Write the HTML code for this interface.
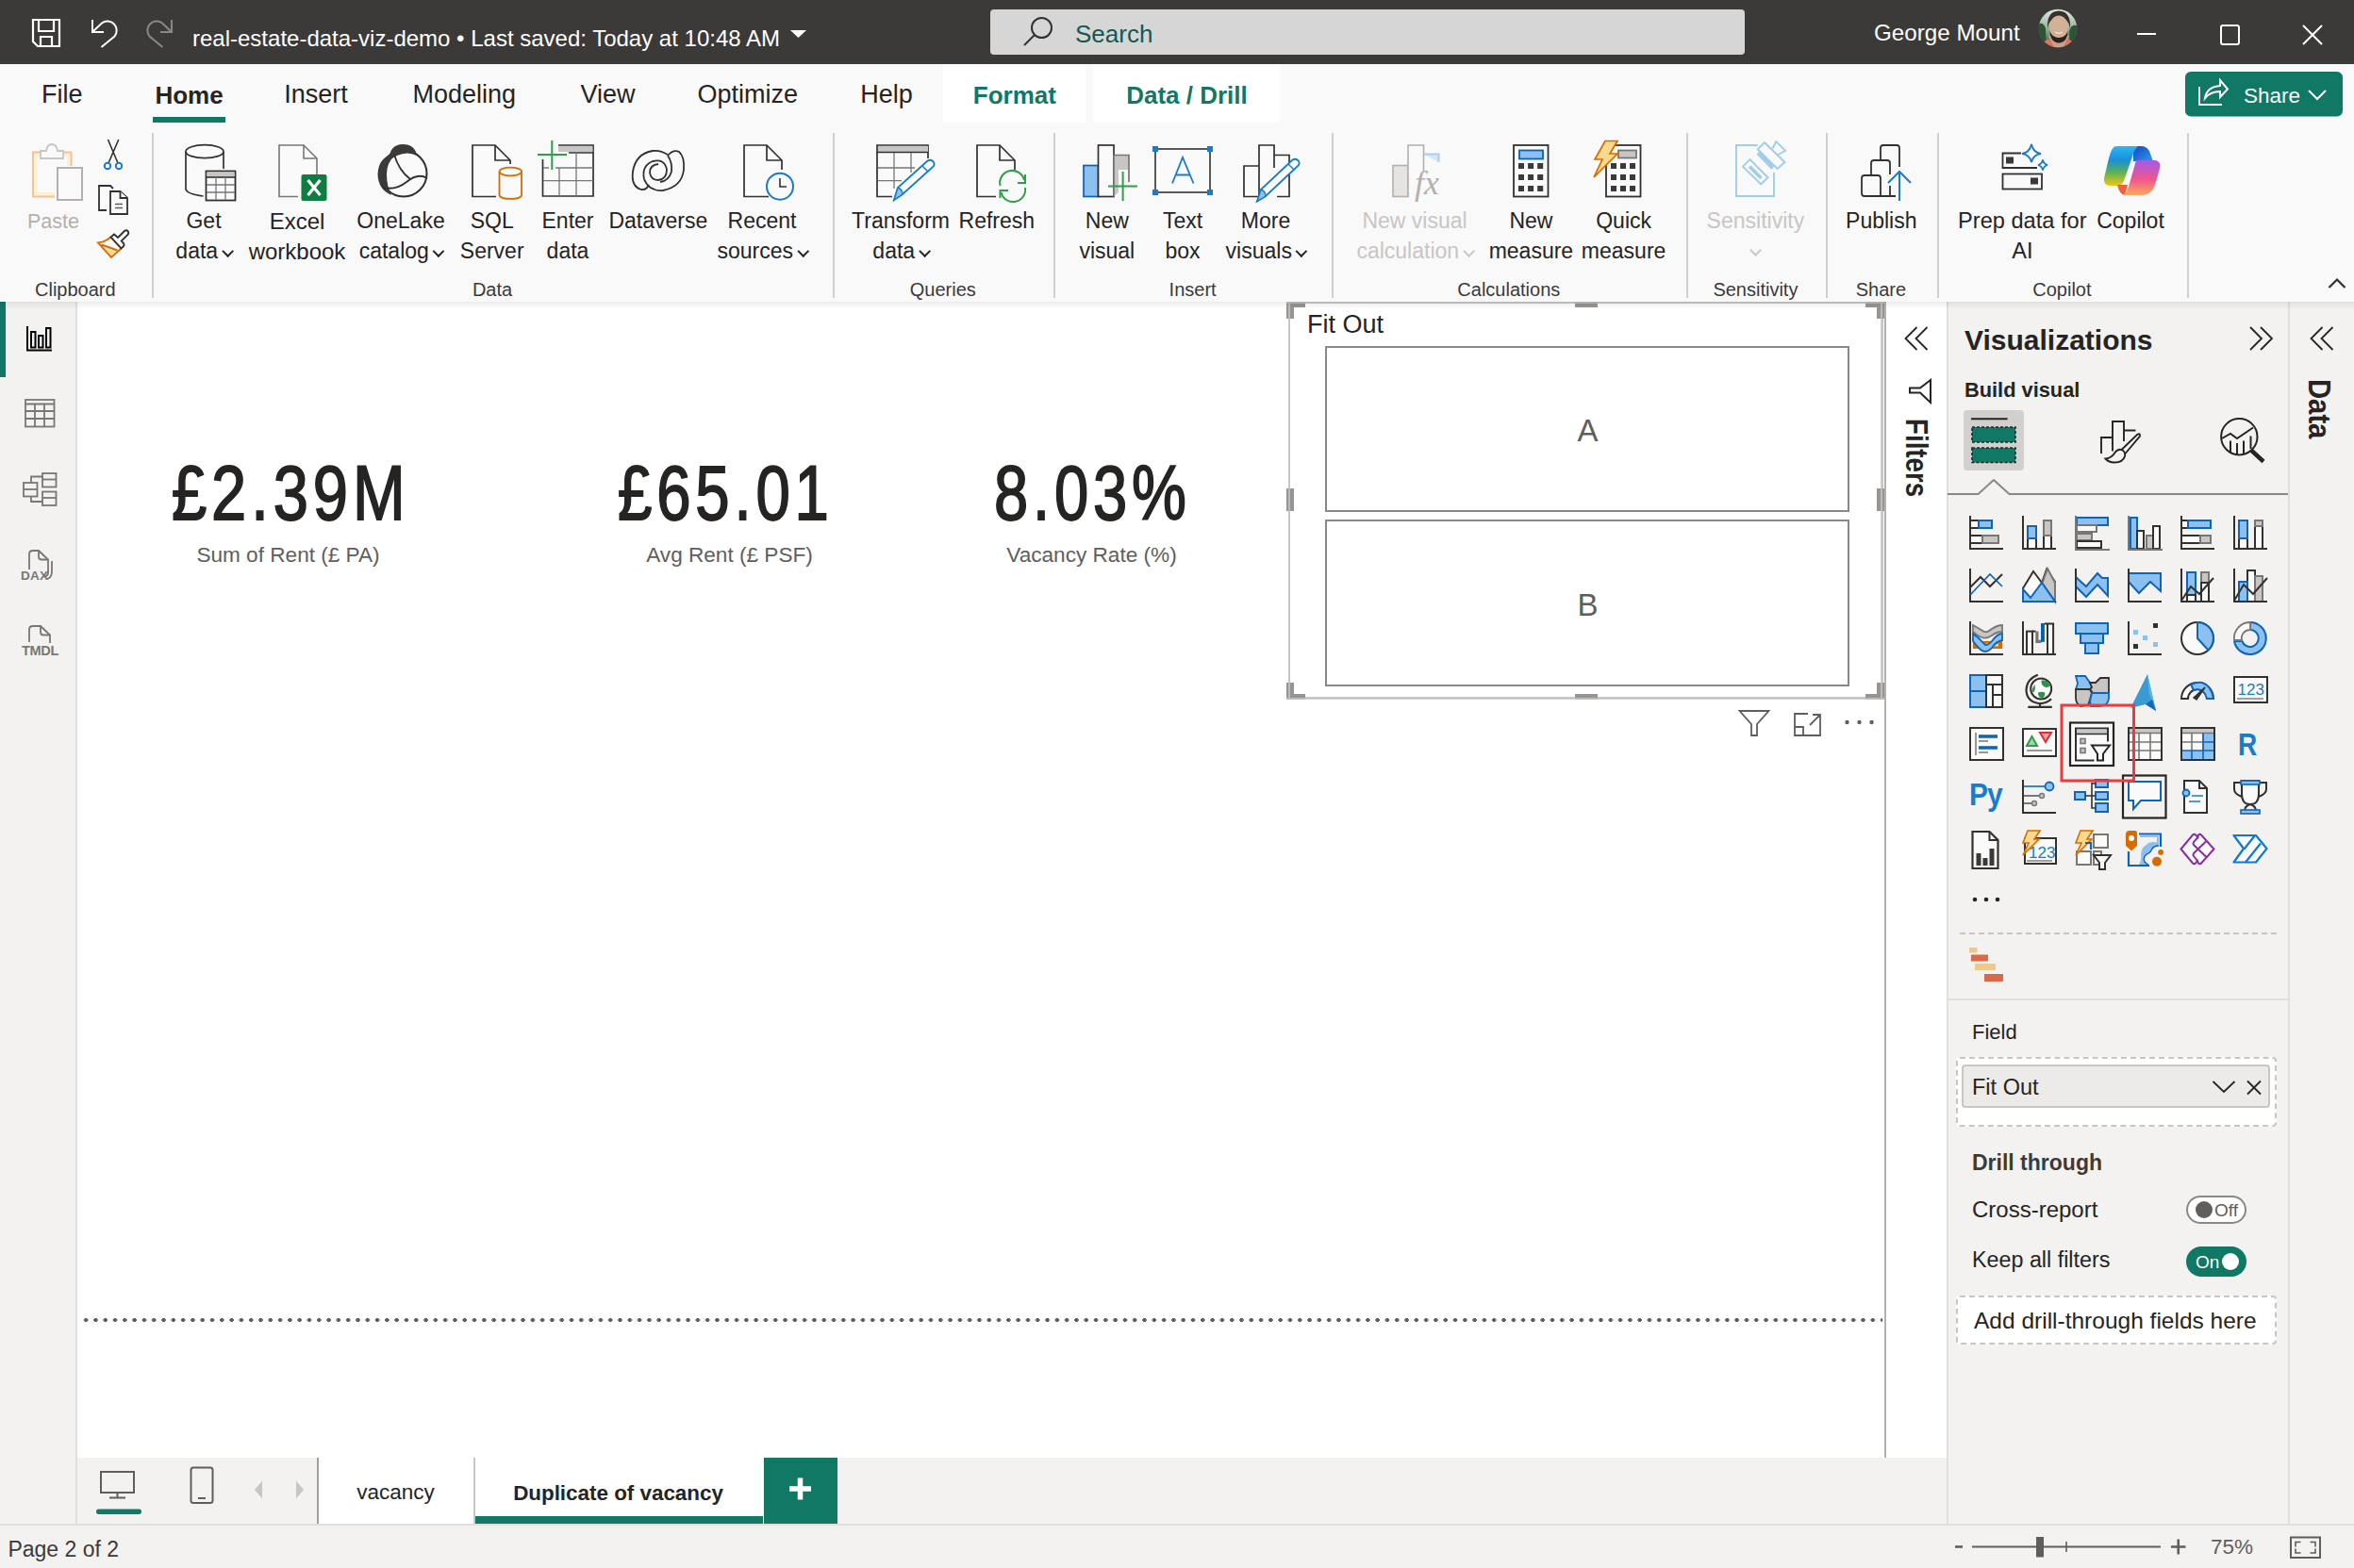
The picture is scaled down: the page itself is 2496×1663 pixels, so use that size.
<!DOCTYPE html><html><head><meta charset="utf-8"><style>
html,body{margin:0;padding:0;width:2496px;height:1663px;overflow:hidden;background:#fff;font-family:"Liberation Sans",sans-serif;}
.t{position:absolute;z-index:2;white-space:nowrap;line-height:1;font-family:"Liberation Sans",sans-serif;}
svg{overflow:visible}
</style></head><body>
<div style="position:absolute;left:0px;top:0px;width:2496px;height:68px;background:#3b3a39;"></div>
<div class="t" style="left:204px;top:28.6px;font-size:24px;font-weight:400;color:#ffffff;">real-estate-data-viz-demo &bull; Last saved: Today at 10:48 AM</div>
<div style="position:absolute;left:1050px;top:10px;width:800px;height:48px;background:#d6d6d6;border-radius:4px;"></div>
<div class="t" style="left:1140px;top:22.9px;font-size:26px;font-weight:400;color:#17584d;">Search</div>
<div class="t" style="left:1987px;top:23.4px;font-size:24.2px;font-weight:400;color:#ffffff;">George Mount</div>
<div class="t" style="left:2379px;top:90.9px;font-size:22.5px;font-weight:400;color:#ffffff;">Share</div>
<div style="position:absolute;left:0px;top:68px;width:2496px;height:252px;background:#f9f9f9;"></div>
<div style="position:absolute;left:1000px;top:68px;width:151px;height:62px;background:#ffffff;"></div>
<div style="position:absolute;left:1159px;top:68px;width:198px;height:62px;background:#ffffff;"></div>
<div class="t" style="left:65.8px;top:87.0px;font-size:27px;font-weight:400;color:#252423;transform:translateX(-50%);transform-origin:center top;">File</div>
<div class="t" style="left:200.5px;top:87.9px;font-size:26px;font-weight:700;color:#252423;transform:translateX(-50%);transform-origin:center top;">Home</div>
<div class="t" style="left:335px;top:87.0px;font-size:27px;font-weight:400;color:#252423;transform:translateX(-50%);transform-origin:center top;">Insert</div>
<div class="t" style="left:492.3px;top:87.0px;font-size:27px;font-weight:400;color:#252423;transform:translateX(-50%);transform-origin:center top;">Modeling</div>
<div class="t" style="left:644.6px;top:87.0px;font-size:27px;font-weight:400;color:#252423;transform:translateX(-50%);transform-origin:center top;">View</div>
<div class="t" style="left:792.8px;top:87.0px;font-size:27px;font-weight:400;color:#252423;transform:translateX(-50%);transform-origin:center top;">Optimize</div>
<div class="t" style="left:940px;top:87.0px;font-size:27px;font-weight:400;color:#252423;transform:translateX(-50%);transform-origin:center top;">Help</div>
<div class="t" style="left:1075.9px;top:87.9px;font-size:26px;font-weight:700;color:#117865;transform:translateX(-50%);transform-origin:center top;">Format</div>
<div class="t" style="left:1258.5px;top:87.9px;font-size:26px;font-weight:700;color:#117865;transform:translateX(-50%);transform-origin:center top;">Data / Drill</div>
<div style="position:absolute;left:162px;top:124px;width:77px;height:6px;background:#117865;"></div>
<div style="position:absolute;left:161px;top:141px;width:2px;height:175px;background:#d2d0ce;"></div>
<div style="position:absolute;left:883px;top:141px;width:2px;height:175px;background:#d2d0ce;"></div>
<div style="position:absolute;left:1117px;top:141px;width:2px;height:175px;background:#d2d0ce;"></div>
<div style="position:absolute;left:1412px;top:141px;width:2px;height:175px;background:#d2d0ce;"></div>
<div style="position:absolute;left:1788px;top:141px;width:2px;height:175px;background:#d2d0ce;"></div>
<div style="position:absolute;left:1936px;top:141px;width:2px;height:175px;background:#d2d0ce;"></div>
<div style="position:absolute;left:2054px;top:141px;width:2px;height:175px;background:#d2d0ce;"></div>
<div style="position:absolute;left:2319px;top:141px;width:2px;height:175px;background:#d2d0ce;"></div>
<div class="t" style="left:56.4px;top:224.7px;font-size:21.5px;font-weight:400;color:#b3b0ad;transform:translateX(-50%);transform-origin:center top;">Paste</div>
<div class="t" style="left:216px;top:223.4px;font-size:23px;font-weight:400;color:#252423;transform:translateX(-50%);transform-origin:center top;">Get</div>
<div class="t" style="left:216px;top:255.4px;font-size:23px;font-weight:400;color:#252423;transform:translateX(-50%);transform-origin:center top;">data<span class="chev"></span></div>
<div class="t" style="left:315px;top:222.6px;font-size:24px;font-weight:400;color:#252423;transform:translateX(-50%);transform-origin:center top;">Excel</div>
<div class="t" style="left:315px;top:254.6px;font-size:24px;font-weight:400;color:#252423;transform:translateX(-50%);transform-origin:center top;">workbook</div>
<div class="t" style="left:425px;top:223.4px;font-size:23px;font-weight:400;color:#252423;transform:translateX(-50%);transform-origin:center top;">OneLake</div>
<div class="t" style="left:425px;top:255.4px;font-size:23px;font-weight:400;color:#252423;transform:translateX(-50%);transform-origin:center top;">catalog<span class="chev"></span></div>
<div class="t" style="left:521.7px;top:223.4px;font-size:23px;font-weight:400;color:#252423;transform:translateX(-50%);transform-origin:center top;">SQL</div>
<div class="t" style="left:521.7px;top:255.4px;font-size:23px;font-weight:400;color:#252423;transform:translateX(-50%);transform-origin:center top;">Server</div>
<div class="t" style="left:602px;top:223.4px;font-size:23px;font-weight:400;color:#252423;transform:translateX(-50%);transform-origin:center top;">Enter</div>
<div class="t" style="left:602px;top:255.4px;font-size:23px;font-weight:400;color:#252423;transform:translateX(-50%);transform-origin:center top;">data</div>
<div class="t" style="left:697.8px;top:223.4px;font-size:23px;font-weight:400;color:#252423;transform:translateX(-50%);transform-origin:center top;">Dataverse</div>
<div class="t" style="left:808px;top:223.4px;font-size:23px;font-weight:400;color:#252423;transform:translateX(-50%);transform-origin:center top;">Recent</div>
<div class="t" style="left:808px;top:255.4px;font-size:23px;font-weight:400;color:#252423;transform:translateX(-50%);transform-origin:center top;">sources<span class="chev"></span></div>
<div class="t" style="left:955px;top:223.4px;font-size:23px;font-weight:400;color:#252423;transform:translateX(-50%);transform-origin:center top;">Transform</div>
<div class="t" style="left:955px;top:255.4px;font-size:23px;font-weight:400;color:#252423;transform:translateX(-50%);transform-origin:center top;">data<span class="chev"></span></div>
<div class="t" style="left:1056.8px;top:223.4px;font-size:23px;font-weight:400;color:#252423;transform:translateX(-50%);transform-origin:center top;">Refresh</div>
<div class="t" style="left:1173.8px;top:223.4px;font-size:23px;font-weight:400;color:#252423;transform:translateX(-50%);transform-origin:center top;">New</div>
<div class="t" style="left:1173.8px;top:255.4px;font-size:23px;font-weight:400;color:#252423;transform:translateX(-50%);transform-origin:center top;">visual</div>
<div class="t" style="left:1254px;top:223.4px;font-size:23px;font-weight:400;color:#252423;transform:translateX(-50%);transform-origin:center top;">Text</div>
<div class="t" style="left:1254px;top:255.4px;font-size:23px;font-weight:400;color:#252423;transform:translateX(-50%);transform-origin:center top;">box</div>
<div class="t" style="left:1342px;top:223.4px;font-size:23px;font-weight:400;color:#252423;transform:translateX(-50%);transform-origin:center top;">More</div>
<div class="t" style="left:1342px;top:255.4px;font-size:23px;font-weight:400;color:#252423;transform:translateX(-50%);transform-origin:center top;">visuals<span class="chev"></span></div>
<div class="t" style="left:1500px;top:223.4px;font-size:23px;font-weight:400;color:#c8c6c4;transform:translateX(-50%);transform-origin:center top;">New visual</div>
<div class="t" style="left:1500px;top:255.4px;font-size:23px;font-weight:400;color:#c8c6c4;transform:translateX(-50%);transform-origin:center top;">calculation<span class="chev g"></span></div>
<div class="t" style="left:1623.4px;top:223.4px;font-size:23px;font-weight:400;color:#252423;transform:translateX(-50%);transform-origin:center top;">New</div>
<div class="t" style="left:1623.4px;top:255.4px;font-size:23px;font-weight:400;color:#252423;transform:translateX(-50%);transform-origin:center top;">measure</div>
<div class="t" style="left:1721.6px;top:223.4px;font-size:23px;font-weight:400;color:#252423;transform:translateX(-50%);transform-origin:center top;">Quick</div>
<div class="t" style="left:1721.6px;top:255.4px;font-size:23px;font-weight:400;color:#252423;transform:translateX(-50%);transform-origin:center top;">measure</div>
<div class="t" style="left:1861.4px;top:223.4px;font-size:23px;font-weight:400;color:#c8c6c4;transform:translateX(-50%);transform-origin:center top;">Sensitivity</div>
<div style="position:absolute;left:1857px;top:261px;width:7px;height:7px;border-right:2px solid #c8c6c4;border-bottom:2px solid #c8c6c4;transform:rotate(45deg)"></div>
<div class="t" style="left:1994.8px;top:223.4px;font-size:23px;font-weight:400;color:#252423;transform:translateX(-50%);transform-origin:center top;">Publish</div>
<div class="t" style="left:2144.3px;top:222.9px;font-size:23.6px;font-weight:400;color:#252423;transform:translateX(-50%);transform-origin:center top;">Prep data for</div>
<div class="t" style="left:2144.3px;top:254.9px;font-size:23.6px;font-weight:400;color:#252423;transform:translateX(-50%);transform-origin:center top;">AI</div>
<div class="t" style="left:2259px;top:223.4px;font-size:23px;font-weight:400;color:#252423;transform:translateX(-50%);transform-origin:center top;">Copilot</div>
<div class="t" style="left:79.8px;top:296.6px;font-size:20px;font-weight:400;color:#3b3a39;transform:translateX(-50%);transform-origin:center top;">Clipboard</div>
<div class="t" style="left:522px;top:296.6px;font-size:20px;font-weight:400;color:#3b3a39;transform:translateX(-50%);transform-origin:center top;">Data</div>
<div class="t" style="left:999.8px;top:296.6px;font-size:20px;font-weight:400;color:#3b3a39;transform:translateX(-50%);transform-origin:center top;">Queries</div>
<div class="t" style="left:1264.6px;top:296.6px;font-size:20px;font-weight:400;color:#3b3a39;transform:translateX(-50%);transform-origin:center top;">Insert</div>
<div class="t" style="left:1599.8px;top:296.6px;font-size:20px;font-weight:400;color:#3b3a39;transform:translateX(-50%);transform-origin:center top;">Calculations</div>
<div class="t" style="left:1861.4px;top:296.6px;font-size:20px;font-weight:400;color:#3b3a39;transform:translateX(-50%);transform-origin:center top;">Sensitivity</div>
<div class="t" style="left:1994.4px;top:296.6px;font-size:20px;font-weight:400;color:#3b3a39;transform:translateX(-50%);transform-origin:center top;">Share</div>
<div class="t" style="left:2186.4px;top:296.6px;font-size:20px;font-weight:400;color:#3b3a39;transform:translateX(-50%);transform-origin:center top;">Copilot</div>
<div style="position:absolute;left:0px;top:320px;width:80px;height:1296px;background:#f3f2f1;"></div>
<div style="position:absolute;left:80px;top:320px;width:2px;height:1296px;background:#e1dfdd;"></div>
<div style="position:absolute;left:0px;top:320px;width:6px;height:80px;background:#117865;"></div>
<div style="position:absolute;left:82px;top:320px;width:1982px;height:1226px;background:#ffffff;"></div>
<div style="position:absolute;left:1998px;top:320px;width:2px;height:1226px;background:#b3b0ad;"></div>
<div style="position:absolute;left:86px;top:1398px;width:1910px;height:4px;background-image:radial-gradient(circle,#605e5c 1.9px,transparent 2.3px);background-size:10.3px 4px;"></div>
<div class="t" style="left:182px;top:482.6px;font-size:81px;font-weight:400;color:#252423;transform:scaleX(0.825);transform-origin:left top;-webkit-text-stroke:1.8px #252423;letter-spacing:6px;">&pound;2.39M</div>
<div class="t" style="left:655px;top:482.6px;font-size:81px;font-weight:400;color:#252423;transform:scaleX(0.806);transform-origin:left top;-webkit-text-stroke:1.8px #252423;letter-spacing:6px;">&pound;65.01</div>
<div class="t" style="left:1054px;top:482.6px;font-size:81px;font-weight:400;color:#252423;transform:scaleX(0.804);transform-origin:left top;-webkit-text-stroke:1.8px #252423;letter-spacing:6px;">8.03%</div>
<div class="t" style="left:305.5px;top:578.3px;font-size:22.6px;font-weight:400;color:#605e5c;transform:translateX(-50%);transform-origin:center top;">Sum of Rent (&pound; PA)</div>
<div class="t" style="left:773.5px;top:578.3px;font-size:22.6px;font-weight:400;color:#605e5c;transform:translateX(-50%);transform-origin:center top;">Avg Rent (&pound; PSF)</div>
<div class="t" style="left:1157.5px;top:578.3px;font-size:22.6px;font-weight:400;color:#605e5c;transform:translateX(-50%);transform-origin:center top;">Vacancy Rate (%)</div>
<div style="position:absolute;left:1366px;top:320px;width:631px;height:421px;background:transparent;border:2px solid #c8c6c4;box-sizing:border-box;z-index:1;"></div>
<div class="t" style="left:1386px;top:331.1px;font-size:27px;font-weight:400;color:#252423;">Fit Out</div>
<div style="position:absolute;left:1405px;top:367px;width:556px;height:176px;background:#fff;border:2px solid #8a8886;box-sizing:border-box;"></div>
<div style="position:absolute;left:1405px;top:551px;width:556px;height:177px;background:#fff;border:2px solid #8a8886;box-sizing:border-box;"></div>
<div class="t" style="left:1683.5px;top:440.4px;font-size:33px;font-weight:400;color:#605e5c;transform:translateX(-50%);transform-origin:center top;">A</div>
<div class="t" style="left:1683.5px;top:624.5px;font-size:33px;font-weight:400;color:#605e5c;transform:translateX(-50%);transform-origin:center top;">B</div>
<div style="position:absolute;left:82px;top:1546px;width:1982px;height:70px;background:#f3f2f1;"></div>
<div style="position:absolute;left:336px;top:1546px;width:2px;height:70px;background:#a19f9d;"></div>
<div style="position:absolute;left:338px;top:1546px;width:164px;height:70px;background:#ffffff;"></div>
<div style="position:absolute;left:502px;top:1546px;width:2px;height:70px;background:#c8c6c4;"></div>
<div style="position:absolute;left:504px;top:1546px;width:305px;height:70px;background:#ffffff;"></div>
<div style="position:absolute;left:504px;top:1608px;width:305px;height:8px;background:#117865;"></div>
<div style="position:absolute;left:810px;top:1546px;width:78px;height:70px;background:#117865;"></div>
<div class="t" style="left:419.6px;top:1572.4px;font-size:22.5px;font-weight:400;color:#252423;transform:translateX(-50%);transform-origin:center top;">vacancy</div>
<div class="t" style="left:655.5px;top:1572.5px;font-size:22.4px;font-weight:700;color:#252423;transform:translateX(-50%);transform-origin:center top;">Duplicate of vacancy</div>
<div style="position:absolute;left:2000px;top:320px;width:64px;height:1226px;background:#ffffff;"></div>
<div style="position:absolute;left:2064px;top:320px;width:2px;height:1296px;background:#e1dfdd;"></div>
<div class="t" style="left:2049.7px;top:444px;font-size:34px;font-weight:700;color:#252423;transform:rotate(90deg) scaleX(0.815);transform-origin:left top;">Filters</div>
<div style="position:absolute;left:2066px;top:320px;width:360px;height:1296px;background:#f3f2f1;"></div>
<div style="position:absolute;left:2426px;top:320px;width:2px;height:1296px;background:#e1dfdd;"></div>
<div style="position:absolute;left:2428px;top:320px;width:68px;height:1296px;background:#f3f2f1;"></div>
<div class="t" style="left:2083px;top:345.5px;font-size:30px;font-weight:700;color:#252423;">Visualizations</div>
<div class="t" style="left:2083px;top:402.5px;font-size:21.8px;font-weight:700;color:#252423;">Build visual</div>
<div style="position:absolute;left:2082px;top:435px;width:64px;height:64px;background:#d2d0ce;border-radius:4px;"></div>
<div style="position:absolute;left:2066px;top:1059px;width:360px;height:2px;background:#e1dfdd;"></div>
<div class="t" style="left:2091px;top:1083.8px;font-size:22px;font-weight:400;color:#252423;">Field</div>
<div style="position:absolute;left:2074px;top:1121px;width:340px;height:74px;background:#ffffff;border:2px dashed #c8c6c4;border-radius:4px;box-sizing:border-box;"></div>
<div style="position:absolute;left:2080px;top:1129px;width:327px;height:46px;background:#edebe9;border:2px solid #c8c6c4;border-radius:4px;box-sizing:border-box;"></div>
<div class="t" style="left:2091px;top:1142.0px;font-size:23.5px;font-weight:400;color:#252423;">Fit Out</div>
<div class="t" style="left:2091px;top:1221.5px;font-size:23px;font-weight:700;color:#3b3a39;">Drill through</div>
<div class="t" style="left:2091px;top:1270.6px;font-size:24px;font-weight:400;color:#252423;">Cross-report</div>
<div class="t" style="left:2091px;top:1325.2px;font-size:23.3px;font-weight:400;color:#252423;">Keep all filters</div>
<div style="position:absolute;left:2318px;top:1268px;width:64px;height:30px;background:#fff;border:2px solid #8a8886;border-radius:16px;box-sizing:border-box;"></div>
<div style="position:absolute;left:2328px;top:1274px;width:18px;height:18px;background:#605e5c;border-radius:50%;"></div>
<div class="t" style="left:2348px;top:1273.8px;font-size:19px;font-weight:400;color:#605e5c;">Off</div>
<div style="position:absolute;left:2318px;top:1322px;width:64px;height:32px;background:#117865;border-radius:16px;"></div>
<div class="t" style="left:2328px;top:1328.8px;font-size:19px;font-weight:400;color:#ffffff;">On</div>
<div style="position:absolute;left:2356px;top:1329px;width:18px;height:18px;background:#ffffff;border-radius:50%;"></div>
<div style="position:absolute;left:2074px;top:1374px;width:340px;height:52px;background:#ffffff;border:2px dashed #c8c6c4;border-radius:4px;box-sizing:border-box;"></div>
<div class="t" style="left:2093px;top:1389.2px;font-size:24.5px;font-weight:400;color:#252423;">Add drill-through fields here</div>
<div class="t" style="left:2476.5px;top:401.5px;font-size:34px;font-weight:700;color:#252423;transform:rotate(90deg) scaleX(0.86);transform-origin:left top;">Data</div>
<div style="position:absolute;left:0px;top:1616px;width:2496px;height:2px;background:#e1dfdd;"></div>
<div style="position:absolute;left:0px;top:1618px;width:2496px;height:45px;background:#f3f2f1;"></div>
<div class="t" style="left:8.4px;top:1631.5px;font-size:23px;font-weight:400;color:#3b3a39;">Page 2 of 2</div>
<div class="t" style="left:2344px;top:1630.4px;font-size:22.5px;font-weight:400;color:#605e5c;">75%</div>
<div style="position:absolute;left:0px;top:320px;width:2496px;height:8px;background:linear-gradient(rgba(0,0,0,0.075),rgba(0,0,0,0));z-index:3;"></div>
<style>.chev{display:inline-block;width:6.5px;height:6.5px;border-right:2.4px solid #252423;border-bottom:2.4px solid #252423;transform:rotate(45deg);margin-left:6px;position:relative;top:-4px}.chev.g{border-color:#c8c6c4}</style>
<svg style="position:absolute;z-index:1;left:0;top:0;pointer-events:none" width="2496" height="1663" viewBox="0 0 2496 1663" fill="none"><g stroke="#fff" stroke-width="2.2" fill="none"><path d="M35,21 H63 V49 H40 L35,44 Z"/><path d="M41,21 V33 H57 V21"/><path d="M43,49 V39 H55 V49"/></g><g stroke="#fff" stroke-width="2" fill="none" stroke-linecap="butt"><path d="M98,21 V34 H110"/><path d="M98,34 L108,24.5 A9.8,9.8 0 0 1 121.5,38.5 L107.5,50"/></g><g stroke="#8a8886" stroke-width="2" fill="none"><path d="M182,21 V34 H170"/><path d="M182,34 L172,24.5 A9.8,9.8 0 0 0 158.5,38.5 L172.5,50"/></g><path d="M838,32 H855 L846.5,40 Z" fill="#fff"/><g stroke="#323130" stroke-width="2" fill="none"><circle cx="1104.5" cy="29.5" r="10.5"/><path d="M1097,37 L1086,48"/></g><defs><clipPath id="avc"><circle cx="2182" cy="30" r="20.2"/></clipPath><linearGradient id="avbg" x1="0" y1="0" x2="0" y2="1"><stop offset="0" stop-color="#e4ebe6"/><stop offset="0.45" stop-color="#9fb8a5"/><stop offset="1" stop-color="#2f5a3a"/></linearGradient></defs><g clip-path="url(#avc)"><rect x="2161" y="9" width="42" height="42" fill="url(#avbg)"/><path d="M2161,26 Q2166,22 2169,30 L2170,50 H2161Z M2203,28 Q2196,24 2194,34 L2195,50 H2203Z" fill="#2d5535"/><path d="M2171,30 Q2170,12 2183,11.5 Q2196,12 2195,30 Q2193,18 2183,18.5 Q2173,18 2171,30Z" fill="#3a302a"/><path d="M2172,38 L2178,52 H2188 L2194,38Z" fill="#c9a188"/><ellipse cx="2183" cy="29" rx="9.8" ry="12.5" fill="#d4b096"/><path d="M2173.5,33 Q2174,45 2183,45.5 Q2192,45 2192.5,33 Q2190,40 2183,40 Q2176,40 2173.5,33Z" fill="#2b211d"/><path d="M2179,34 Q2183,36.5 2187,34" stroke="#f0e0d8" stroke-width="1.4" fill="none"/><path d="M2162,52 Q2166,43 2173,41.5 L2178,50 H2188 L2192,41.5 Q2199,43 2203,52Z" fill="#e4715a"/></g><g stroke="#fff" stroke-width="2" fill="none"><path d="M2266,36 H2286"/><rect x="2355" y="27" width="19" height="20" rx="2"/><path d="M2442,27 L2462,47 M2462,27 L2442,47"/></g><rect x="2317" y="76" width="167" height="47.5" rx="6" fill="#117865"/><g stroke="#fff" stroke-width="2" fill="none"><path d="M2332,92 V111 H2356"/><path d="M2338,104 Q2340,92 2354,91 V85 L2362,94.5 L2354,103 V97 Q2344,97 2338,104Z"/><path d="M2448,96 L2457,105 L2466,96"/></g><path d="M58,206.5 H37 V163.5 H73.5 V176" stroke="#fdf0d3" stroke-width="5" fill="none"/><path d="M58,208.5 H35 V161.5 H75.5 V176" stroke="#f2c39a" stroke-width="2" fill="none"/><path d="M58,204.5 H39 V165.5 H71.5 V176" stroke="#f2c39a" stroke-width="0" fill="none"/><path d="M43,160 H49 Q50,153 55,153 Q60,153 61,160 H67 V168 H43 Z" stroke="#c8c6c4" stroke-width="1.8" fill="#f9f9f9"/><rect x="61" y="178" width="26" height="34" stroke="#b3b0ad" stroke-width="2" fill="#fafafa"/><g stroke="#323130" stroke-width="1.6" fill="none"><path d="M114.5,148 L125,173 M125.8,148 L115,173"/></g><g stroke="#1a7cc4" stroke-width="2" fill="#fff"><circle cx="114" cy="176" r="3.2"/><circle cx="126" cy="176" r="3.2"/></g><g stroke="#323130" stroke-width="1.8" fill="#fafafa"><path d="M113,223 H105 V197 H117 L120,200"/><path d="M117,203 H127.5 L135,210 V227 H117 Z"/><path d="M127.5,203 V210 H135"/></g><g stroke="#605e5c" stroke-width="1.4"><path d="M122,216.5 H130 M122,220.5 H130"/></g><path d="M109.5,262 L123,266.5 L118,271 Z" fill="#f8d98f"/><path d="M117.5,251.5 Q112,256.5 104,257.5 L118,273 L128.5,263.5 M107.5,259.5 L124.5,265.5" stroke="#d86b00" stroke-width="1.9" fill="none"/><path d="M117.5,251.5 L121,248.5 L125,252 L132,245 Q134,243.3 135.7,245.3 Q137,247.5 135.2,249.2 L128.8,255.6 L131,258 Q132.2,260 130.6,261.6 L128.5,263.5 Z" stroke="#323130" stroke-width="1.9" fill="#fafafa"/><g stroke="#323130" stroke-width="1.7" fill="#fafafa"><path d="M197,161 V201 Q199,206 215.5,208"/><path d="M237,161 V179"/><ellipse cx="217" cy="160.7" rx="20" ry="7"/></g><rect x="218.5" y="181.5" width="31" height="31" stroke="#323130" stroke-width="1.8" fill="#fafafa"/><rect x="219.5" y="182.5" width="29" height="5" fill="#c8c6c4"/><path d="M218.5,188 H249.5" stroke="#323130" stroke-width="1.6"/><g stroke="#797775" stroke-width="1.3"><path d="M229,188 V212 M239,188 V212 M219,196 H249 M219,204 H249"/></g><path d="M316,208.5 H296 V154 H322 L336,168 V185" stroke="#797775" stroke-width="1.6" fill="#fafafa"/><path d="M322,154 V168 H336" stroke="#797775" stroke-width="1.6" fill="none"/><rect x="319.5" y="185" width="27" height="28" rx="2" fill="#107c41"/><path d="M326.5,191 L339.5,207 M339.5,191 L326.5,207" stroke="#fff" stroke-width="3.2"/><circle cx="428" cy="184" r="24.5" stroke="#323130" stroke-width="2" fill="#fafafa"/><path d="M412,171 Q413,153 427,153 Q440,153 442,165 Q432,160 421,165 Q416,167 412,171Z" fill="#3b3a39"/><path d="M414,164 Q401,169 400.5,185 Q401,201 415,207 Q410,197 410,185 Q410,172 419,165Z" fill="#3b3a39"/><path d="M418,164 Q423,181 435,190 M406,199 Q420,202 431,193 Q443,183 453,189" stroke="#323130" stroke-width="1.8" fill="none"/><path d="M526,208.5 H501 V154 H525 L541,170 V174" stroke="#323130" stroke-width="1.7" fill="#fafafa"/><path d="M525,154 V170 H541" stroke="#323130" stroke-width="1.7" fill="none"/><path d="M529.5,182 V207.5 A12,4.3 0 0 0 553,207.5 V182" stroke="#d86b00" stroke-width="1.8" fill="#fafafa"/><ellipse cx="541.3" cy="182" rx="11.8" ry="4.3" stroke="#d86b00" stroke-width="1.8" fill="#fafafa"/><path d="M575.5,169 V208 H629 V154 H592" stroke="#323130" stroke-width="1.7" fill="#fafafa"/><rect x="592" y="155" width="36.5" height="6" fill="#c8c6c4"/><path d="M603,162 H629" stroke="#323130" stroke-width="1.5"/><g stroke="#797775" stroke-width="1.3"><path d="M593,178 V208 M611,162 V208 M576,178 H582 M589,178 H629 M576,191.7 H629"/></g><path d="M570,164 H601 M585.3,149 V180" stroke="#2e9e48" stroke-width="2"/><g stroke="#323130" stroke-width="1.8" fill="none"><path d="M708,164 Q700,159 692,160 Q674,163 671,182 Q669,198 680,201 Q685,202 688,196"/><path d="M708,165 Q714,158 720,161 Q726,166 725,180 Q723,198 703,202 Q688,203 683,190 Q680,176 692,171 Q705,168 707,180 Q707,190 698,191 Q690,191 689,183 Q689,175 698,174"/><path d="M708,165 Q713,172 712,182 Q709,192 700,193"/></g><path d="M815,208.5 H789 V154 H813 L829,170 V180" stroke="#323130" stroke-width="1.7" fill="#fafafa"/><path d="M813,154 V170 H829" stroke="#323130" stroke-width="1.7" fill="none"/><circle cx="827" cy="197.7" r="14" stroke="#1a7cc4" stroke-width="2" fill="#fafafa"/><path d="M827,189 V198 H834" stroke="#323130" stroke-width="1.6" fill="none"/><path d="M946,208.5 H930 V154 H984 V168" stroke="#323130" stroke-width="1.7" fill="#fafafa"/><rect x="931" y="155" width="53" height="6" fill="#c8c6c4"/><path d="M930,161.5 H984" stroke="#323130" stroke-width="1.6"/><g stroke="#797775" stroke-width="1.3"><path d="M948,162 V200 M966,162 V183 M931,178 H970 M931,191.6 H956"/></g><path d="M948,212 L952,199 L983,171 Q987,168 990,172 Q992,175 988,178 L957,206 Z" stroke="#1a7cc4" stroke-width="1.8" fill="#fafafa"/><path d="M948,212 L952,199 Q957,201 957,206 Z" fill="#8cc0ef" stroke="#1a7cc4" stroke-width="1.4"/><path d="M978,176 L984,182" stroke="#1a7cc4" stroke-width="1.4"/><path d="M1056,208.5 H1036 V154 H1060 L1076,170 V180" stroke="#323130" stroke-width="1.7" fill="#fafafa"/><path d="M1060,154 V170 H1076" stroke="#323130" stroke-width="1.7" fill="none"/><circle cx="1073.7" cy="197.8" r="16" fill="#fafafa"/><g stroke="#2e9e48" stroke-width="2" fill="none"><path d="M1060.5,197 A13,13 0 0 1 1086,191"/><path d="M1087,185 V194 H1079"/><path d="M1087,199 A13,13 0 0 1 1061.5,204"/><path d="M1060.5,210 V202 H1069"/></g><rect x="1149" y="175.5" width="15.5" height="33" stroke="#0f5fb5" stroke-width="1.7" fill="#8cc0ef"/><rect x="1164.5" y="154" width="16.5" height="54.5" stroke="#323130" stroke-width="1.7" fill="#fafafa"/><path d="M1181,208.5 V164.5 H1197 V193" stroke="#797775" stroke-width="1.7" fill="#c8c6c4"/><rect x="1186" y="180" width="10" height="30" fill="#fafafa"/><path d="M1175,197.5 H1206 M1190.6,182 V213" stroke="#2e9e48" stroke-width="2"/><rect x="1225" y="158" width="58" height="46" stroke="#323130" stroke-width="1.6" fill="#fafafa"/><g fill="#1a7cc4"><rect x="1222" y="155" width="6" height="6"/><rect x="1280" y="155" width="6" height="6"/><rect x="1222" y="201" width="6" height="6"/><rect x="1280" y="201" width="6" height="6"/></g><path d="M1243,194.5 L1254,167 L1265.5,194.5 M1247,185.5 H1261.5" stroke="#1a7cc4" stroke-width="1.8" fill="none"/><g stroke="#323130" stroke-width="1.7" fill="#fafafa"><path d="M1334,208.5 H1319 V176 H1334.5"/><path d="M1335,208 V154 H1351 V164.5 H1367 V208.5 H1354"/><path d="M1351,164.5 V178"/></g><path d="M1333,213.5 L1337,201 L1370,170 Q1374,167 1377,171 Q1379,174 1375,177 L1342,208 Z" stroke="#1a7cc4" stroke-width="1.8" fill="#fafafa"/><path d="M1333,213.5 L1337,201 Q1342,203 1342,208 Z" fill="#8cc0ef" stroke="#1a7cc4" stroke-width="1.4"/><path d="M1366,174 L1372,180" stroke="#1a7cc4" stroke-width="1.4"/><rect x="1477" y="175.5" width="16" height="33" stroke="#b3b0ad" stroke-width="1.6" fill="#e6e4e2"/><path d="M1493,208.5 V154 H1509.5 V182" stroke="#b3b0ad" stroke-width="1.6" fill="#fafafa"/><path d="M1509.5,163.5 H1525.5 V172" stroke="#a9cdee" stroke-width="1.8" fill="#d6e8f8"/><text x="1500" y="206" font-family="Liberation Serif" font-style="italic" font-size="36" fill="#b3b0ad">fx</text><rect x="1605" y="154" width="36.5" height="54.5" stroke="#323130" stroke-width="1.8" fill="#fafafa"/><rect x="1611" y="159.5" width="25" height="9" stroke="#0f5fb5" stroke-width="1.8" fill="#8cc0ef"/><g fill="#3b3a39"><rect x="1610.0" y="173" width="6" height="6"/><rect x="1610.0" y="185" width="6" height="6"/><rect x="1610.0" y="197" width="6" height="6"/><rect x="1620.1" y="173" width="6" height="6"/><rect x="1620.1" y="185" width="6" height="6"/><rect x="1620.1" y="197" width="6" height="6"/><rect x="1630.2" y="173" width="6" height="6"/><rect x="1630.2" y="185" width="6" height="6"/><rect x="1630.2" y="197" width="6" height="6"/></g><rect x="1703" y="154" width="36.5" height="54.5" stroke="#323130" stroke-width="1.8" fill="#fafafa"/><rect x="1716" y="159.5" width="19" height="8" stroke="#797775" stroke-width="1.8" fill="#c8c6c4"/><g fill="#3b3a39"><rect x="1708.0" y="173" width="6" height="6"/><rect x="1708.0" y="185" width="6" height="6"/><rect x="1708.0" y="197" width="6" height="6"/><rect x="1718.0" y="173" width="6" height="6"/><rect x="1718.0" y="185" width="6" height="6"/><rect x="1718.0" y="197" width="6" height="6"/><rect x="1728.0" y="173" width="6" height="6"/><rect x="1728.0" y="185" width="6" height="6"/><rect x="1728.0" y="197" width="6" height="6"/></g><path d="M1702,149.5 H1715 L1707,163 H1715 L1690,188 L1699,169 H1691 Z" stroke="#d86b00" stroke-width="1.7" fill="#f8d98f"/><g stroke="#a0cde8" stroke-width="1.9" fill="none"><path d="M1863.5,154 H1841 V208 H1881 V183"/><path d="M1848,176.7 L1855.5,169 L1874.5,188.3 L1867.2,195.5 Z"/><path d="M1863.8,158.4 L1871,151.2 L1892.5,172 L1884.6,179 Z"/><path d="M1879.5,157.5 L1883.3,150 L1893,159.7 L1885.5,164"/></g><path d="M1855,176.5 L1867.5,189" stroke="#a0cde8" stroke-width="3.5"/><path d="M1862.5,163.5 L1866.5,160 L1882,175.5 L1878.5,180 Z" fill="#a0cde8"/><g stroke="#323130" stroke-width="1.8" fill="none"><path d="M1994,169 V157 Q1994,154 1997,154 H2011 Q2014,154 2014,157 V177"/><path d="M1984,185 V173 Q1984,170 1987,170 H2001 Q2004,170 2004,173 V185 M2004,197 V208"/><path d="M1977,186 H1991 Q1994,186 1994,189 V208 M2010,208 H1977 Q1974,208 1974,205 V189 Q1974,186 1977,186"/></g><path d="M2014,213 V182 M2002,194 L2014,182 L2026,194" stroke="#1a7cc4" stroke-width="2" fill="none"/><g stroke="#323130" stroke-width="1.8" fill="none"><path d="M2143,162.5 H2123.5 V178 H2160"/><rect x="2123.5" y="184.5" width="41.5" height="16"/></g><g fill="#3b3a39"><rect x="2127" y="166.5" width="8" height="7"/><rect x="2153" y="188.5" width="8" height="7"/></g><g stroke="#1a7cc4" stroke-width="1.8" fill="#fafafa"><path d="M2154,153 Q2156,162 2164,163 Q2156,164 2154,172 Q2152,164 2144,163 Q2152,162 2154,153Z"/><path d="M2166,169.5 Q2167,174 2171,175 Q2167,176 2166,180.5 Q2165,176 2161,175 Q2165,174 2166,169.5Z"/></g><defs><linearGradient id="cpA" x1="0" y1="0" x2="0" y2="1"><stop offset="0" stop-color="#2bb6f6"/><stop offset="0.35" stop-color="#1b8fd8"/><stop offset="0.65" stop-color="#57b05a"/><stop offset="1" stop-color="#f2c811"/></linearGradient><linearGradient id="cpB" x1="0" y1="0" x2="0" y2="1"><stop offset="0" stop-color="#a35be8"/><stop offset="0.55" stop-color="#f0568e"/><stop offset="1" stop-color="#fbaa5a"/></linearGradient><linearGradient id="cpC" x1="0" y1="0" x2="1" y2="1"><stop offset="0" stop-color="#1546c8"/><stop offset="1" stop-color="#2f9be8"/></linearGradient></defs><path d="M2262,155 H2272 Q2278,156 2280,163 L2283,171 H2262 Z" fill="url(#cpC)"/><path d="M2244,155 H2267 Q2263,159 2261,166 L2252,192 Q2250,197 2244,197 H2237 Q2230,196 2231,189 L2236,168 Q2239,155 2244,155 Z" fill="url(#cpA)"/><path d="M2245,196 H2256 L2253,207 Q2247,206 2245,196Z" fill="#f0613c"/><path d="M2265,170 H2285 Q2292,171 2290,179 L2285,196 Q2281,207 2272,207 H2250 Q2255,205 2257,198 Z" fill="url(#cpB)"/><path d="M2469.5,305 L2478,296.5 L2486.5,305" stroke="#323130" stroke-width="2.2" fill="none"/><g stroke="#000" stroke-width="2" fill="none"><path d="M29,346 V371.5 H55"/><rect x="33" y="352" width="4.5" height="16.5"/><rect x="41" y="356" width="4.5" height="12.5"/><rect x="49" y="348" width="4.5" height="20.5"/></g><g stroke="#797775" stroke-width="1.8" fill="none"><rect x="27" y="424" width="30.5" height="28.5"/><path d="M27,428.5 H57.5 M27,436 H57.5 M27,444 H57.5 M37,428.5 V452.5 M47,428.5 V452.5"/></g><g stroke="#797775" stroke-width="1.8" fill="none"><rect x="25" y="512" width="14.5" height="14.5"/><path d="M25,519 H39.5"/><rect x="45" y="502" width="14.5" height="14.5"/><path d="M45,508.5 H59.5"/><rect x="45" y="521.5" width="14.5" height="14.5"/><path d="M45,528 H59.5"/><path d="M33,512 V505.5 H45 M33,526.5 V532 H45"/></g><g stroke="#797775" stroke-width="1.8" fill="none"><path d="M31,604 V587.5 Q31,584 35,584 H41 L51,593.5 V607 Q51,610.5 48,611.5"/><path d="M41,584 V590.5 Q41,593.5 44,593.5 H51"/><path d="M55,595 V606 Q55,612.5 50,614"/></g><text x="22" y="614.6" font-family="Liberation Sans" font-weight="bold" font-size="13.5" fill="#797775" letter-spacing="0.2">DAX</text><g stroke="#797775" stroke-width="1.8" fill="none"><path d="M31,681 V667.5 Q31,664 35,664 H43 L53,673.5 V682"/><path d="M43,664 V670.5 Q43,673.5 46,673.5 H53"/></g><text x="23" y="694.7" font-family="Liberation Sans" font-weight="bold" font-size="14.5" fill="#797775" letter-spacing="-0.3">TMDL</text><g fill="#979593"><path d="M1364,320 H1384 V326 H1372 V338 H1364 Z"/><path d="M1998,320 H1978 V326 H1990 V338 H1998 Z"/><path d="M1364,742 H1384 V736 H1372 V724 H1364 Z"/><path d="M1998,742 H1978 V736 H1990 V724 H1998 Z"/><rect x="1670" y="320" width="24" height="6"/><rect x="1670" y="736" width="24" height="6"/><rect x="1364" y="518" width="8" height="24"/><rect x="1990" y="518" width="8" height="24"/></g><path d="M1367,320 V742 M1995,320 V742 M1364,321 H1998 M1364,741 H1998" stroke="#c8c6c4" stroke-width="2" fill="none" opacity="0.8"/><g stroke="#605e5c" stroke-width="1.8" fill="none"><path d="M1844.5,754 H1875.5 L1863,768 V780 H1857 V768 Z"/><path d="M1917,757 H1903 V780 H1930 V766 M1903,771 H1912 V780 M1919,769 L1929.5,758.5 M1922,758 H1930 V766"/></g><g fill="#605e5c"><circle cx="1958.5" cy="766" r="2.2"/><circle cx="1971.5" cy="766" r="2.2"/><circle cx="1984.5" cy="766" r="2.2"/></g><path d="M2032.5,347 L2020.5,359 L2032.5,371 M2043.5,347 L2031.5,359 L2043.5,371" stroke="#252423" stroke-width="1.8" fill="none"/><path d="M2386,347 L2398,359 L2386,371 M2397,347 L2409,359 L2397,371" stroke="#252423" stroke-width="1.8" fill="none"/><path d="M2462.5,347 L2450.5,359 L2462.5,371 M2473.5,347 L2461.5,359 L2473.5,371" stroke="#252423" stroke-width="1.8" fill="none"/><path d="M2047,403 V427 L2036,416.5 H2025 V411.5 H2036 Z" stroke="#252423" stroke-width="2" fill="none" stroke-linejoin="miter"/><path d="M2090,444.3 H2128.6" stroke="#252423" stroke-width="2"/><rect x="2091" y="453" width="46" height="16" fill="#117865" stroke="#252423" stroke-width="1.6" stroke-dasharray="3 2"/><rect x="2091" y="475" width="46" height="15.5" fill="#117865" stroke="#252423" stroke-width="1.6" stroke-dasharray="3 2"/><g stroke="#252423" stroke-width="1.9" fill="none"><path d="M2228,481 V464 H2240 M2240,478.5 V447 H2252 V468 M2252,456.5 H2264.5"/><path d="M2249.5,477 L2266,461 Q2269.5,459 2269,462.5 L2253.5,481"/><path d="M2232.5,486.5 Q2239,486 2242.5,480 Q2245.5,476 2249.5,477 Q2254,479 2253,484 Q2251,490.5 2242,490.5 Q2236,490.5 2232.5,486.5 Z"/></g><g stroke="#252423" stroke-width="2" fill="none"><circle cx="2374.3" cy="463.2" r="19.2"/><path d="M2356,465 L2365,460 L2372,465 L2389,453.5 M2365,467.5 V480 M2372,470 V483 M2379,467.5 V482 M2386.5,462.5 V476"/></g><path d="M2387,477.5 L2400,489.5" stroke="#252423" stroke-width="4.5"/><path d="M2065,524 H2097.5 L2114,509 L2130.5,524 H2426" stroke="#8a8886" stroke-width="2" fill="none"/><path d="M2078,990 H2414" stroke="#c8c6c4" stroke-width="2" stroke-dasharray="6 4"/><g fill="#252423"><circle cx="2094" cy="954" r="2.3"/><circle cx="2106" cy="954" r="2.3"/><circle cx="2118" cy="954" r="2.3"/></g><g><rect x="2088" y="1005" width="8.5" height="5.5" fill="#ecc98e"/><rect x="2090" y="1012.5" width="18" height="7" fill="#d9694a"/><rect x="2094" y="1022" width="22" height="7" fill="#ecc98e"/><rect x="2104" y="1033" width="20" height="8" fill="#d9694a"/></g><path d="M2346.5,1147 L2358,1158 L2369.5,1147 M2383,1146.5 L2397,1160.5 M2397,1146.5 L2383,1160.5" stroke="#252423" stroke-width="1.8" fill="none"/><g stroke="#605e5c" fill="#605e5c"><path d="M2073,1640.5 H2081" stroke-width="2.6"/><path d="M2091,1640.5 H2291" stroke-width="2"/><rect x="2159" y="1630" width="8" height="21.5" stroke="none"/><path d="M2191,1635 V1646" stroke-width="1.6"/><path d="M2302,1640.5 H2317.5 M2309.75,1632.5 V1648.5" stroke-width="2.6"/></g><g stroke="#605e5c" stroke-width="2" fill="none"><rect x="2429" y="1630.5" width="31" height="21.5"/><path d="M2434,1640.5 V1635.5 H2439.5 M2455,1640.5 V1635.5 H2449.5 M2434,1642.5 V1647 H2439.5 M2455,1642.5 V1647 H2449.5" stroke-width="1.6"/></g><g stroke="#605e5c" stroke-width="2" fill="none"><rect x="107" y="1561" width="35" height="22"/><path d="M124.5,1583 V1588 M116,1588.5 H133"/><rect x="202.5" y="1556.5" width="23" height="37.5" rx="2.5"/></g><path d="M210,1589 H218" stroke="#605e5c" stroke-width="2"/><rect x="102" y="1600.5" width="48" height="5.5" rx="2.75" fill="#117865"/><path d="M278,1570.5 L270,1580 L278,1589.5 Z" fill="#c8c6c4"/><path d="M314,1570.5 L322,1580 L314,1589.5 Z" fill="#c8c6c4"/><path d="M848.5,1567.5 V1590.5 M837,1579 H860" stroke="#fff" stroke-width="5.5"/><g transform="translate(2088,547)" stroke-width="2" stroke-linejoin="miter"><rect x="1" y="5" width="9" height="8" fill="#fafafa" stroke="#323130"/><rect x="10" y="5" width="14" height="8" fill="#8cc0ef" stroke="#0f64b8"/><rect x="1" y="21" width="13" height="8" fill="#fafafa" stroke="#323130"/><rect x="14" y="21" width="17" height="8" fill="#c8c6c4" stroke="#797775"/><path d="M1,0 V35 H36" stroke="#323130" fill="none"/></g><g transform="translate(2144,547)" stroke-width="2" stroke-linejoin="miter"><rect x="6" y="24" width="9" height="11" fill="#fafafa" stroke="#323130"/><rect x="6" y="11" width="9" height="13" fill="#8cc0ef" stroke="#0f64b8"/><rect x="23" y="21" width="8" height="14" fill="#fafafa" stroke="#323130"/><rect x="23" y="5" width="8" height="16" fill="#c8c6c4" stroke="#797775"/><path d="M1,0 V35 H36" stroke="#323130" fill="none"/></g><g transform="translate(2200,547)" stroke-width="2" stroke-linejoin="miter"><rect x="2" y="2" width="33" height="8" fill="#8cc0ef" stroke="#0f64b8"/><rect x="2" y="10" width="21" height="7" fill="#fafafa" stroke="#797775"/><rect x="2" y="19" width="16" height="7" fill="#c8c6c4" stroke="#797775"/><rect x="2" y="27" width="26" height="7" fill="#fafafa" stroke="#323130"/><path d="M1,0 V36 H37" stroke="#797775" fill="none"/></g><g transform="translate(2256,547)" stroke-width="2" stroke-linejoin="miter"><rect x="3" y="2" width="7" height="33" fill="#8cc0ef" stroke="#0f64b8"/><rect x="10" y="16" width="7" height="19" fill="#fafafa" stroke="#323130"/><rect x="20" y="21" width="7" height="14" fill="#c8c6c4" stroke="#797775"/><rect x="27" y="11" width="7" height="24" fill="#fafafa" stroke="#323130"/><path d="M1,0 V36 H37" stroke="#797775" fill="none"/></g><g transform="translate(2312,547)" stroke-width="2" stroke-linejoin="miter"><rect x="1" y="5" width="7" height="8" fill="#fafafa" stroke="#323130"/><rect x="8" y="5" width="24" height="8" fill="#8cc0ef" stroke="#0f64b8"/><rect x="1" y="21" width="20" height="8" fill="#fafafa" stroke="#323130"/><rect x="21" y="21" width="11" height="8" fill="#c8c6c4" stroke="#797775"/><path d="M1,0 V35 H36" stroke="#323130" fill="none"/></g><g transform="translate(2368,547)" stroke-width="2" stroke-linejoin="miter"><rect x="6" y="24" width="9" height="11" fill="#fafafa" stroke="#323130"/><rect x="6" y="5" width="9" height="19" fill="#8cc0ef" stroke="#0f64b8"/><rect x="23" y="11" width="8" height="24" fill="#fafafa" stroke="#323130"/><rect x="23" y="5" width="8" height="6" fill="#c8c6c4" stroke="#797775"/><path d="M1,0 V35 H36" stroke="#323130" fill="none"/></g><g transform="translate(2088,603)" stroke-width="2" stroke-linejoin="miter"><path d="M1,0 V35 H36" stroke="#323130" fill="none"/><path d="M1,20 L12,9 L22,19 L35,6" stroke="#323130" fill="none"/><path d="M1,28 L22,6 L35,19" stroke="#0f64b8" fill="none" stroke-width="1.6"/></g><g transform="translate(2144,603)" stroke-width="2" stroke-linejoin="miter"><path d="M1,21 L12,3 L21,15 L26,1 L35,14 V35 H1Z" fill="#fafafa" stroke="#323130"/><path d="M22,14 L27,0 L35,15 V35 L21,15Z" fill="#c8c6c4" stroke="#797775"/><path d="M1,22 L9,31 L21,15 L35,35 H1Z" fill="#8cc0ef" stroke="#0f64b8"/></g><g transform="translate(2200,603)" stroke-width="2" stroke-linejoin="miter"><path d="M1,9 L12,19 L24,5 L29,10 H35 V29 L24,17 L12,30 L1,19Z" fill="#8cc0ef" stroke="#0f64b8"/><path d="M1,0 V35 H36" stroke="#323130" fill="none"/></g><g transform="translate(2256,603)" stroke-width="2" stroke-linejoin="miter"><path d="M1,5 H35 V24 L24,14 L12,26 L1,14Z" fill="#8cc0ef" stroke="#0f64b8"/><path d="M1,0 V35 H36" stroke="#323130" fill="none"/></g><g transform="translate(2312,603)" stroke-width="2" stroke-linejoin="miter"><rect x="7" y="4" width="9" height="24" fill="#8cc0ef" stroke="#0f64b8"/><rect x="7" y="28" width="9" height="7" fill="#fafafa" stroke="#323130"/><rect x="22" y="4" width="8" height="11" fill="#c8c6c4" stroke="#797775"/><rect x="22" y="15" width="8" height="20" fill="#fafafa" stroke="#323130"/><path d="M1,0 V35 H36" stroke="#323130" fill="none"/><path d="M1,34 L11,19 L20,27 L35,10" stroke="#323130" fill="none"/></g><g transform="translate(2368,603)" stroke-width="2" stroke-linejoin="miter"><rect x="15" y="2" width="8" height="33" fill="#fafafa" stroke="#323130"/><rect x="6" y="14" width="9" height="21" fill="#8cc0ef" stroke="#0f64b8"/><rect x="23" y="8" width="8" height="27" fill="#c8c6c4" stroke="#797775"/><path d="M1,0 V35 H36" stroke="#323130" fill="none"/><path d="M1,34 L11,17 L21,27 L36,10" stroke="#323130" fill="none"/></g><g transform="translate(2088,659)" stroke-width="2" stroke-linejoin="miter"><path d="M1,0 V35 H36" stroke="#323130" fill="none"/><rect x="4" y="21" width="31" height="8" fill="#d86b00" stroke="none"/><path d="M8,25 H31" stroke="#f8d98f" stroke-width="3"/><path d="M4,4 Q11,8 16,11 Q19,12 24,8 Q30,4 35,4 V11 Q29,11 24,15 Q18,19 13,17 Q8,15 4,11Z" fill="#c8c6c4" stroke="#797775" stroke-width="1.8"/><path d="M4,13 Q10,17 16,24 Q19,27 24,21 Q30,13 35,13 V20 Q29,21 24,28 Q18,35 12,30 Q7,25 4,21Z" fill="#8cc0ef" stroke="#0f64b8" stroke-width="1.8"/></g><g transform="translate(2144,659)" stroke-width="2" stroke-linejoin="miter"><rect x="24" y="2.6" width="9" height="32.4" fill="#fafafa" stroke="none"/><rect x="5" y="10.6" width="6" height="24.4" fill="#fafafa" stroke="#323130"/><path d="M11,10.6 H14.5" stroke="#323130"/><path d="M15.9,10.6 V21.3 H20.5" stroke="#797775" stroke-width="3.2" fill="none"/><rect x="20" y="2" width="3.9" height="19.8" fill="#0063b1" stroke="none"/><path d="M23.8,2.6 H33.1 V35 M27,2.6 V35" stroke="#323130" fill="none"/><path d="M1,0 V35 H36" stroke="#323130" fill="none"/></g><g transform="translate(2200,659)" stroke-width="2" stroke-linejoin="miter"><rect x="1" y="2" width="34" height="11" fill="#8cc0ef" stroke="#0f64b8"/><rect x="6" y="13" width="24" height="10" fill="#8cc0ef" stroke="#0f64b8"/><rect x="11" y="23" width="14" height="11" fill="#8cc0ef" stroke="#0f64b8"/></g><g transform="translate(2256,659)" stroke-width="2" stroke-linejoin="miter"><path d="M1,0 V35 H36" stroke="#323130" fill="none"/><rect x="27" y="2" width="5" height="5" fill="#323130" stroke="none"/><rect x="6" y="24" width="5" height="5" fill="#323130" stroke="none"/><rect x="6" y="9" width="5" height="5" fill="#8cc0ef" stroke="none"/><rect x="16" y="15" width="5" height="5" fill="#8cc0ef" stroke="none"/><rect x="27" y="22" width="5" height="5" fill="#8cc0ef" stroke="none"/></g><g transform="translate(2312,659)" stroke-width="2" stroke-linejoin="miter"><circle cx="18" cy="18" r="17" fill="#fafafa" stroke="#323130"/><path d="M18,1 A17,17 0 0 1 29.5,30.5 L18,18Z" fill="#8cc0ef" stroke="#0f64b8"/></g><g transform="translate(2368,659)" stroke-width="2" stroke-linejoin="miter"><circle cx="18" cy="18" r="13" fill="none" stroke="#8cc0ef" stroke-width="9"/><path d="M18,1 A17,17 0 1 1 1,21 M18,1 V9 M1,21 H9" stroke="#0f64b8" fill="none"/><path d="M18,9 A9,9 0 1 1 9,20" stroke="#0f64b8" fill="none"/><path d="M1,20 A17,17 0 0 1 18,1 V9 A9,9 0 0 0 9,20Z" fill="#fafafa" stroke="#797775" stroke-width="1.8"/></g><g transform="translate(2088,715)" stroke-width="2" stroke-linejoin="miter"><rect x="1" y="1" width="17" height="34" fill="#8cc0ef" stroke="#0f64b8"/><path d="M1,18 H18" stroke="#0f64b8"/><rect x="18" y="1" width="17" height="34" fill="#fafafa" stroke="#323130"/><path d="M18,11 H35 M25,11 V35 M25,22 H35" stroke="#323130" fill="none"/></g><g transform="translate(2144,715)" stroke-width="2" stroke-linejoin="miter"><circle cx="20.2" cy="15.5" r="11" fill="#fafafa" stroke="#323130"/><path d="M20.5,6.6 Q26,5.5 30,10.5 Q30,13.5 27,13.8 Q23,14.5 21.5,11.5 Q20,9 20.5,6.6Z M13.5,10.7 Q11,14 10.2,18.5 L13,18.9 Q14.5,15 13.5,10.7Z M17,19.5 Q21,18 24.3,19.5 Q24.5,23.5 21.5,26 Q18,25 17,21.5Z" fill="#2e9248" stroke="none"/><path d="M16.8,0.8 Q5,5 4.5,17 Q5,29 17.5,31 Q26,31.5 31,26.3" stroke="#323130" fill="none" stroke-width="2.2"/><path d="M19,31 V34.8 M6.3,34.8 H31.8" stroke="#323130" fill="none" stroke-width="2.2"/></g><g transform="translate(2200,715)" stroke-width="2" stroke-linejoin="miter"><path d="M1,2 H11 L16,9 L18,14 L18,20 L16,16 L1,16 L3,10Z" fill="#8cc0ef" stroke="#0f64b8" stroke-width="1.8"/><path d="M16,9 H22 L27,4 H36 V20 H19 L16,16 L18,14Z" fill="#c8c6c4" stroke="#323130" stroke-width="1.8"/><path d="M1,16 H16 L18,20 L16,27 L14,33 L6,34 Q1,31 1,25Z" fill="#c8c6c4" stroke="#323130" stroke-width="1.8"/><path d="M18,20 H36 V26 Q35,34 26,34 H17 L16,29Z" fill="#8cc0ef" stroke="#0f64b8" stroke-width="1.8"/></g><g transform="translate(2256,715)" stroke-width="2" stroke-linejoin="miter"><path d="M3,36 L21,0 L30,39 L19,32Z" fill="#3b9ad2"/><path d="M21,0 L30,39 L23,21Z" fill="#5fb4e0"/><path d="M19,32 L30,39 L26,27Z" fill="#0f6cbd"/></g><g transform="translate(2312,715)" stroke-width="2" stroke-linejoin="miter"><g transform="translate(0,-7)"><path d="M1,33 A17,17 0 0 1 35,33 H28 A10,10 0 0 0 8,33Z" fill="#fafafa" stroke="#323130"/><path d="M11,18 Q18,15 23,16 Q33,19 35,33 H28 Q26,24 18,23 L14,24Z" fill="#8cc0ef" stroke="#0f64b8"/><path d="M14,32 L26,21 L17,34Z" fill="#323130" stroke="#323130" stroke-width="1.5"/></g></g><g transform="translate(2368,715)" stroke-width="2" stroke-linejoin="miter"><rect x="1" y="3" width="35" height="27" fill="#fafafa" stroke="#323130"/><text x="4.5" y="22" font-family="Liberation Sans" font-size="17" fill="#1a7cc4" stroke="none">123</text><path d="M4,26 H32" stroke="#797775" stroke-width="1.4"/></g><g transform="translate(2088,771)" stroke-width="2" stroke-linejoin="miter"><rect x="1" y="1" width="35" height="34" fill="#fafafa" stroke="#323130"/><path d="M7,6 V30" stroke="#797775" stroke-width="1.5"/><path d="M10,10 H30 M10,22 H30" stroke="#0f64b8" stroke-width="3.5"/><path d="M10,15 H20 M10,27 H20" stroke="#797775" stroke-width="1.5"/></g><g transform="translate(2144,771)" stroke-width="2" stroke-linejoin="miter"><rect x="1" y="2" width="35" height="29" fill="#fafafa" stroke="#323130"/><path d="M5,20 L10.5,10 L16,20Z" fill="#a0d9a8" stroke="#2e9e48"/><path d="M19,6 H31 L25,16Z" fill="#f19aa3" stroke="#d13438"/><path d="M5,25 H32" stroke="#797775" stroke-width="1.5"/></g><g transform="translate(2194,765.5)" stroke-width="2"><rect x="1" y="1" width="46" height="45.5" fill="#fafafa" stroke="#252423" stroke-width="2.2"/><path d="M26.5,41 H7 V7 H41 V21" fill="none" stroke="#323130"/><rect x="8" y="8" width="32" height="4.5" fill="#c8c6c4" stroke="none"/><path d="M7,13 H41" stroke="#323130" stroke-width="1.6"/><rect x="12" y="18" width="5" height="5" fill="#c8c6c4" stroke="#797775" stroke-width="1.6"/><rect x="12" y="28" width="5" height="5" fill="#c8c6c4" stroke="#797775" stroke-width="1.6"/><path d="M24,25 H43 L36,34 V41 H30 V34Z" fill="#fafafa" stroke="#252423"/></g><g transform="translate(2256,771)" stroke-width="2" stroke-linejoin="miter"><rect x="1" y="1" width="35" height="34" fill="#fafafa" stroke="#323130"/><rect x="2" y="2" width="33" height="4" fill="#c8c6c4" stroke="none"/><path d="M1,6.5 H36 M1,16 H36 M1,25 H36 M12,6.5 V35 M24,6.5 V35" stroke="#797775" stroke-width="1.6"/><rect x="1" y="1" width="35" height="34" fill="none" stroke="#323130"/></g><g transform="translate(2312,771)" stroke-width="2" stroke-linejoin="miter"><rect x="1" y="1" width="35" height="34" fill="#fafafa" stroke="#323130"/><rect x="2" y="2" width="33" height="4" fill="#c8c6c4" stroke="none"/><rect x="24" y="6.5" width="12" height="28.5" fill="#8cc0ef" stroke="none"/><rect x="1" y="25" width="35" height="10" fill="#8cc0ef" stroke="none"/><path d="M1,6.5 H36 M1,16 H24 M12,6.5 V25 M24,6.5 V25" stroke="#797775" stroke-width="1.6"/><path d="M1,25 H36 M24,16 H36 M24,6.5 V35 M12,25 V35" stroke="#0f64b8" stroke-width="1.6"/><rect x="1" y="1" width="35" height="34" fill="none" stroke="#323130"/></g><g transform="translate(2368,771)" stroke-width="2" stroke-linejoin="miter"><text x="6" y="30" font-family="Liberation Sans" font-weight="bold" font-size="33" fill="#1a7cc4" stroke="none" transform="scale(0.85,1)">R</text></g><g transform="translate(2088,827)" stroke-width="2" stroke-linejoin="miter"><text x="0" y="26.5" font-family="Liberation Sans" font-weight="bold" font-size="34" fill="#1a7cc4" stroke="none" transform="scale(0.88,1)" letter-spacing="-1">Py</text></g><g transform="translate(2144,827)" stroke-width="2" stroke-linejoin="miter"><path d="M1,0 V35 H36" stroke="#323130" fill="none"/><path d="M2,7 H27" stroke="#1a7cc4" stroke-width="1.8"/><circle cx="29" cy="7" r="4.5" fill="#8cc0ef" stroke="#0f64b8" stroke-width="1.8"/><path d="M2,17 H20 M2,25 H12" stroke="#797775" stroke-width="1.8"/><circle cx="21" cy="17" r="2.5" fill="#c8c6c4" stroke="#797775" stroke-width="1.5"/><circle cx="13" cy="25" r="2.5" fill="#c8c6c4" stroke="#797775" stroke-width="1.5"/></g><g transform="translate(2200,827)" stroke-width="2" stroke-linejoin="miter"><rect x="0" y="13" width="11" height="8" fill="#8cc0ef" stroke="#0f64b8"/><rect x="22" y="0" width="13" height="8" fill="#8cc0ef" stroke="#0f64b8"/><rect x="22" y="13" width="13" height="8" fill="#8cc0ef" stroke="#0f64b8"/><rect x="22" y="25" width="13" height="9" fill="#8cc0ef" stroke="#0f64b8"/><path d="M11,17 H22 M18,3 V30 H22 M18,4 H22" stroke="#323130" stroke-width="1.6" fill="none"/></g><rect x="2251" y="822.5" width="45.5" height="45" fill="none" stroke="#252423" stroke-width="2.2"/><g transform="translate(2256,827)" stroke-width="2" stroke-linejoin="miter"><path d="M1,2 H35 V22 H14 L6,31 V22 H1Z" fill="#fafafa" stroke="#0f64b8" stroke-width="2"/></g><g transform="translate(2312,827)" stroke-width="2" stroke-linejoin="miter"><path d="M4,1 H20 L28,9 V35 H4Z" fill="#fafafa" stroke="#323130"/><path d="M20,1 V9 H28" fill="none" stroke="#323130"/><circle cx="6" cy="14" r="3.5" fill="#8cc0ef" stroke="#0f64b8" stroke-width="1.8"/><path d="M12,17 H24 M9,23 H21" stroke="#1a7cc4" stroke-width="1.6"/></g><g transform="translate(2368,827)" stroke-width="2" stroke-linejoin="miter"><path d="M9,1 H27 V15 Q27,26 18,26 Q9,26 9,15Z" fill="#fafafa" stroke="#323130"/><path d="M9,3 H1 V10 Q1,15 9,18 M27,3 H35 V10 Q35,15 27,18" fill="none" stroke="#323130"/><path d="M18,26 Q12,28 12,33" fill="none" stroke="#323130"/><path d="M18,26 Q24,28 24,33" fill="none" stroke="#323130"/><rect x="8" y="1" width="20" height="4" fill="#8cc0ef" stroke="#0f64b8" stroke-width="1.6"/><rect x="8" y="32" width="20" height="4" fill="#8cc0ef" stroke="#0f64b8" stroke-width="1.6"/></g><g transform="translate(2088,883)" stroke-width="2" stroke-linejoin="miter"><g transform="translate(2.5,0)"><path d="M1,-1 H19 L28,8 V38 H1Z" fill="#fafafa" stroke="#323130" stroke-width="2.2"/><path d="M19,-1 V8 H28" fill="none" stroke="#323130"/><rect x="5" y="22" width="5" height="13" fill="#3b3a39" stroke="none"/><rect x="12" y="27" width="5" height="8" fill="#3b3a39" stroke="none"/><rect x="19" y="17" width="5" height="18" fill="#3b3a39" stroke="none"/></g></g><g transform="translate(2144,883)" stroke-width="2" stroke-linejoin="miter"><rect x="3" y="6" width="33" height="27" fill="#fafafa" stroke="#323130"/><text x="7" y="27" font-family="Liberation Sans" font-size="17" fill="#1a7cc4" stroke="none">123</text><path d="M5,30 H32" stroke="#797775" stroke-width="1.4"/><path d="M6,-2 H19 L13,7 H18 L1,24 L7,11 H1Z" fill="#f8d98f" stroke="#d86b00" stroke-width="1.6"/></g><g transform="translate(2200,883)" stroke-width="2" stroke-linejoin="miter"><rect x="20" y="2" width="15" height="14" fill="#fafafa" stroke="#797775"/><rect x="2" y="20" width="15" height="14" fill="#fafafa" stroke="#797775"/><rect x="20" y="20" width="8" height="14" fill="#fafafa" stroke="#797775"/><path d="M20,24 H38 L32,32 V39 H26 V32Z" fill="#fafafa" stroke="#323130"/><path d="M6,-2 H19 L13,7 H18 L1,24 L7,11 H1Z" fill="#f8d98f" stroke="#d86b00" stroke-width="1.6"/><path d="M11,11 H17 V18" stroke="#0f64b8" stroke-width="2.2" fill="none"/></g><g transform="translate(2256,883)" stroke-width="2" stroke-linejoin="miter"><path d="M13,3 H33 V14 Q28,14 26,17 Q24,22 20,23 Q16,26 18,31 L22,34.5 H12 Q15,29 14,23 Q15,15 20,13 Q22,10 27,10 L31,10.5 V5 H13 Z" fill="#8cc0ef" stroke="none"/><path d="M33,14 Q28,14 26,17 Q24,22 20,23 Q16,26 18,31 L22,34.5" stroke="#0f64b8" stroke-width="1.4" fill="none"/><path d="M12,1.5 H35 V15 M1,20 V35 H23" stroke="#0f64b8" stroke-width="2.2" fill="none"/><path d="M-2,2 Q-2,-2 2,-2 H8 Q10,-2 10,2 V14 L4,19.5 L-2,14 Z" fill="#d86b00" stroke="none"/><circle cx="4" cy="5.9" r="3" fill="#fafafa" stroke="none"/><circle cx="31" cy="30.7" r="5" fill="#d86b00" stroke="none"/><circle cx="35.1" cy="20.9" r="2.9" fill="#d86b00" stroke="none"/></g><g transform="translate(2312,883)" stroke-width="2" stroke-linejoin="miter"><path d="M0.5,17.5 L13,2.5 Q14.5,1 16,2.5 L18.5,5 L19,2.5 Q20.6,1 22,2.5 L35.5,17.5 L22,32.5 Q20.6,34 19,32.5 L18,30 L16,32.5 Q14.5,34 13,32.5 Z" fill="#fafafa" stroke="#8a2da5" stroke-width="2"/><path d="M18.5,5 L14,10 Q13,11.5 14,13 L27.5,26 M27.5,9 L14,22 Q13,23.5 14,25 L18,30" fill="none" stroke="#8a2da5" stroke-width="2"/></g><g transform="translate(2368,883)" stroke-width="2" stroke-linejoin="miter"><path d="M0.5,3 H24 L35.5,17 L24,31.5 H0.5 L11,17 Z" fill="#fafafa" stroke="#0f78d4" stroke-width="2.2" stroke-linejoin="round"/><path d="M23,3 L11.5,17.5 M29,11.5 L13,31.5" stroke="#0f78d4" stroke-width="2.2"/></g><rect x="2186" y="748" width="76.5" height="80" fill="none" stroke="#f0383d" stroke-width="3"/></svg>
</body></html>
